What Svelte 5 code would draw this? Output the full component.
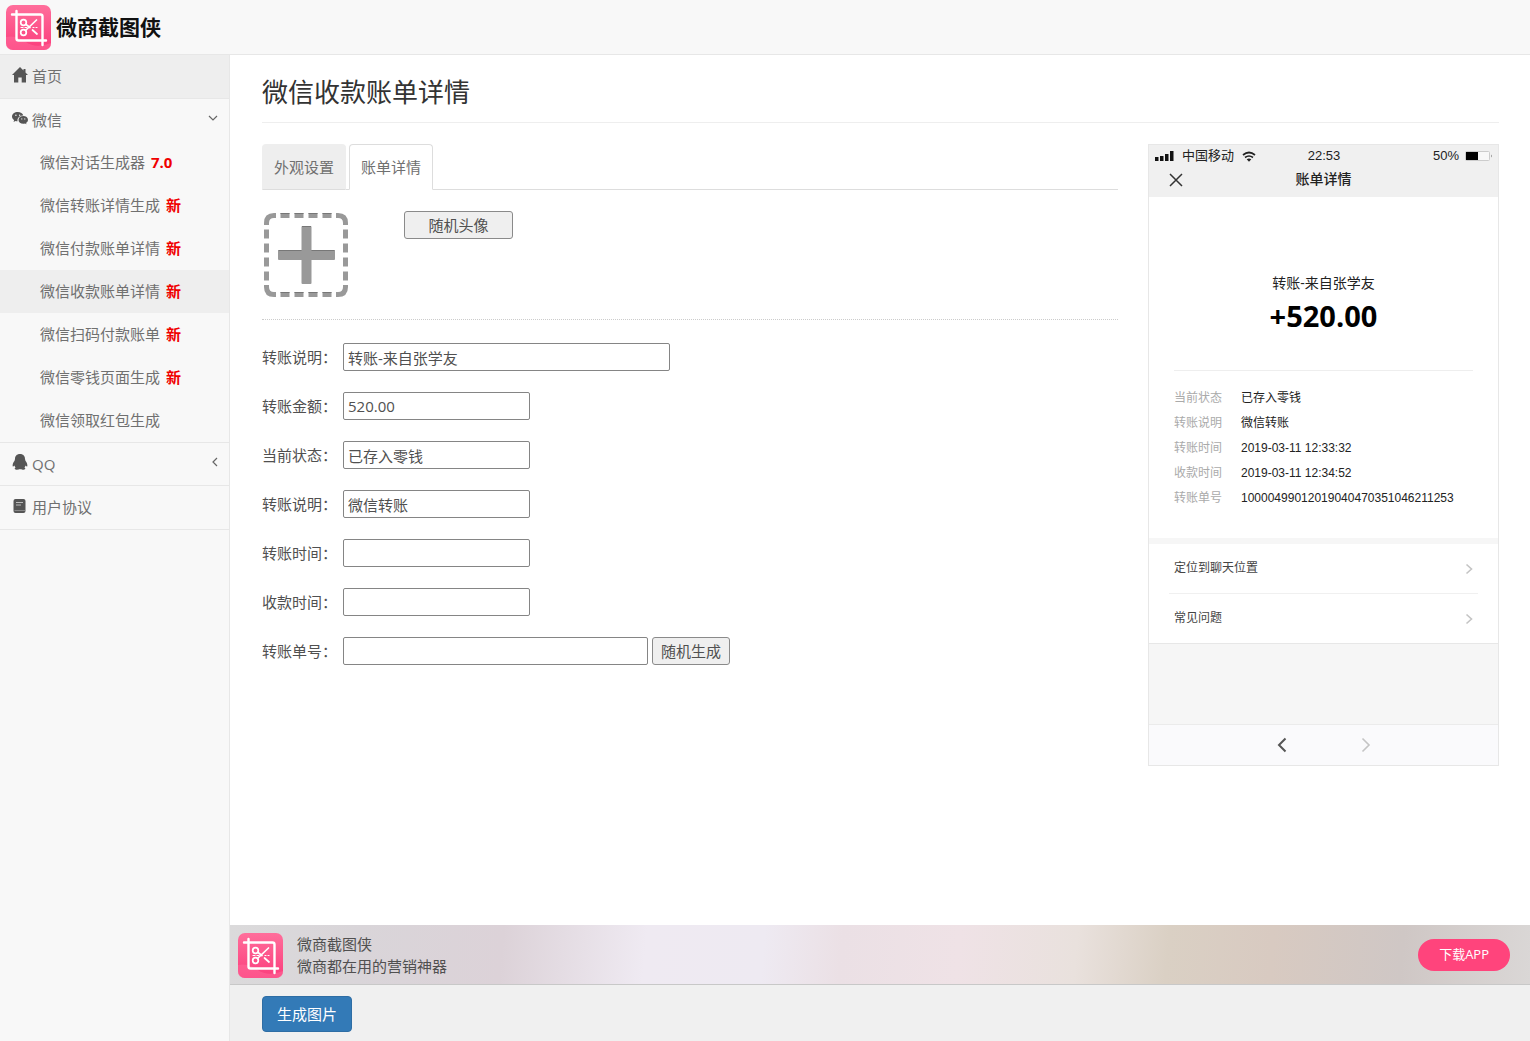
<script>
  let openMenu = $state('wechat');
  let activeTab = $state('detail');

  const wechatItems = [
    { name: '微信对话生成器', tag: '7.0' },
    { name: '微信转账详情生成', tag: '新' },
    { name: '微信付款账单详情', tag: '新' },
    { name: '微信收款账单详情', tag: '新', active: true },
    { name: '微信扫码付款账单', tag: '新' },
    { name: '微信零钱页面生成', tag: '新' },
    { name: '微信领取红包生成' }
  ];

  const tabs = [
    { id: 'look', name: '外观设置' },
    { id: 'detail', name: '账单详情' }
  ];

  let fields = $state([
    { id: 'title', label: '转账说明：', value: '转账-来自张学友', size: 'wide' },
    { id: 'amount', label: '转账金额：', value: '520.00' },
    { id: 'status', label: '当前状态：', value: '已存入零钱' },
    { id: 'remark', label: '转账说明：', value: '微信转账' },
    { id: 'sendTime', label: '转账时间：', value: '' },
    { id: 'receiveTime', label: '收款时间：', value: '' },
    { id: 'orderNo', label: '转账单号：', value: '', size: 'long', random: true }
  ]);

  const sendTime = '2019-03-11 12:33:32';
  const receiveTime = '2019-03-11 12:34:52';
  const orderNo = '10000499012019040470351046211253';

  let details = $derived([
    ['当前状态', fields[2].value],
    ['转账说明', fields[3].value],
    ['转账时间', fields[4].value || sendTime],
    ['收款时间', fields[5].value || receiveTime],
    ['转账单号', fields[6].value || orderNo]
  ]);

  function toggle(menu) {
    openMenu = openMenu === menu ? '' : menu;
  }

  function randomOrder() {
    let no = '1000049901';
    while (no.length < 32) no += Math.floor(Math.random() * 10);
    fields[6].value = no;
  }
</script>

{#snippet logo()}
  <svg class="logo" viewBox="0 0 46 46" aria-hidden="true">
    <defs>
      <linearGradient id="pink" x1="0" y1="0" x2="0" y2="1">
        <stop offset="0" stop-color="#ff6e9b" />
        <stop offset="1" stop-color="#fb3d7c" />
      </linearGradient>
    </defs>
    <rect x="0" y="1" width="45" height="45" rx="7" fill="url(#pink)" />
    <path d="M0 33q10-2 20 5t25 1v0q0 7-7 7H7q-7 0-7-7z" fill="#ff6b9b" opacity=".5" />
    <g fill="none" stroke="#fff" stroke-linecap="round">
      <path d="M6 10.500h28.500q2 0 2 2V41M10.500 7v27.500q0 2 2 2H40" stroke-width="2.400" />
      <circle cx="17.500" cy="18.500" r="2.800" stroke-width="1.700" />
      <circle cx="17.500" cy="28.500" r="2.800" stroke-width="1.700" />
      <path d="M19.500 26.500L30.500 16M20 20.500l4 3M26.500 26l4.500 4" stroke-width="1.700" />
      <path d="M15 23.500h2M19 23.500h2M27 23.500h1M30 23.500h1" stroke-width="1.200" />
    </g>
  </svg>
{/snippet}

<div class="page">
  <header class="navbar">
    <a class="brand" href="#home">
      {@render logo()}
      <span>微商截图侠</span>
    </a>
  </header>

  <div class="body">
    <nav class="sidebar">
      <a class="menu-item current" href="#home">
        <svg class="menu-icon" viewBox="0 0 16 16" aria-hidden="true">
          <path d="M8 0L0 8h2v7.500h4.300v-5h3.400v5H14V8h2l-2.500-2.600V2h-2v1.400z" fill="#555" />
        </svg>
        首页
      </a>

      <button class="menu-item open" aria-expanded={openMenu === 'wechat'} onclick={() => toggle('wechat')}>
        <svg class="menu-icon" viewBox="0 0 16 16" aria-hidden="true">
          <path d="M5.800 2C2.600 2 0 4 0 6.600c0 1.500.8 2.700 2.100 3.600l-.6 1.700 2-1c.7.200 1.400.3 2 .3C5 8 7.500 5.500 11.300 5.500 10.800 3.500 8.500 2 5.800 2z" fill="#555" />
          <path d="M16 9.900c0-2.100-2.100-3.800-4.700-3.800S6.500 7.800 6.500 9.900s2.100 3.800 4.800 3.800c.6 0 1.100-.1 1.700-.3l1.500.8-.4-1.300c1.100-.8 1.900-1.800 1.900-3z" fill="#555" />
          <g fill="#f8f8f8">
            <circle cx="3.900" cy="5.300" r=".7" /><circle cx="7.700" cy="5.300" r=".7" />
            <circle cx="9.800" cy="8.900" r=".6" /><circle cx="12.800" cy="8.900" r=".6" />
          </g>
        </svg>
        微信
        <svg class="arrow" viewBox="0 0 12 12" aria-hidden="true">
          <path d="M2 4l4 4 4-4" />
        </svg>
      </button>

      {#if openMenu === 'wechat'}
        <ul class="submenu">
          {#each wechatItems as item}
            <li>
              <a class:active={item.active} href="#wechat">
                {item.name}
                {#if item.tag}<b>{item.tag}</b>{/if}
              </a>
            </li>
          {/each}
        </ul>
      {/if}

      <button class="menu-item line" aria-expanded={openMenu === 'qq'} onclick={() => toggle('qq')}>
        <svg class="menu-icon" viewBox="0 0 16 16" aria-hidden="true">
          <path d="M8 0C4.700 0 2.900 2.200 3 5.200c-.3.500-.5 1-.4 1.600C1.200 8.600.3 10.500.7 12.300c.2.600 1.100.1 1.700-.8.200.8.600 1.500 1.200 2-.8.400-1 1-.8 1.500.4 1 4.100 1 5.200.1 1.100.9 4.800.9 5.200-.1.200-.5 0-1.100-.8-1.500.6-.5 1-1.200 1.200-2 .6.900 1.500 1.400 1.700.8.400-1.800-.5-3.700-1.900-5.500.1-.6-.1-1.100-.4-1.600C13.100 2.200 11.300 0 8 0z" fill="#555" />
        </svg>
        QQ
        <svg class="arrow" viewBox="0 0 12 12" aria-hidden="true">
          <path d="M10 2L6 6l4 4" />
        </svg>
      </button>

      <a class="menu-item" href="#agreement">
        <svg class="menu-icon" viewBox="0 0 16 16" aria-hidden="true">
          <rect x="1.500" y="1" width="12" height="14" rx="2" fill="#555" />
          <path d="M4 4.500h7M4 7h5" stroke="#bbb" />
          <path d="M2.500 12.500h10.500" stroke="#888" />
        </svg>
        用户协议
      </a>
    </nav>

    <div class="content">
      <main>
        <h1>微信收款账单详情</h1>

        <div class="columns">
          <section class="editor">
            <div class="tabs" role="tablist">
              {#each tabs as tab}
                <button
                  role="tab"
                  class="tab"
                  class:active={activeTab === tab.id}
                  aria-selected={activeTab === tab.id}
                  onclick={() => (activeTab = tab.id)}
                >{tab.name}</button>
              {/each}
            </div>

            <div class="avatar-row">
              <button class="upload" aria-label="上传头像">
                <svg viewBox="0 0 84 84" aria-hidden="true">
                  <g fill="none" stroke="#999" stroke-width="5">
                    <path d="M2.500 12V10q0-7.500 7.500-7.500h2M72 2.500h2q7.500 0 7.500 7.500v2M81.500 72v2q0 7.500-7.500 7.500h-2M12 81.500h-2q-7.500 0-7.500-7.500v-2" />
                    <path d="M16.500 2.500H68M16.500 81.500H68M2.500 16.500V68M81.500 16.500V68" stroke-dasharray="9 5" />
                  </g>
                  <path d="M16.500 .5H25.500M30.500 .5h9M44.500 .5h9M58.500 .5h9M16.500 79.500h9M30.500 79.500h9M44.500 79.500h9M58.500 79.500h9" stroke="#777" />
                  <rect x="14" y="37" width="57" height="10" rx="1" fill="#999" />
                  <rect x="37.500" y="13" width="10" height="58" rx="1" fill="#999" />
                  <path d="M14.500 37.500h23M47.500 37.500h23M38 13.500h9" stroke="#777" />
                </svg>
              </button>
              <button class="plain random-avatar">随机头像</button>
            </div>

            <form class="fields">
              {#each fields as field}
                <div class="field">
                  <label for={field.id}>{field.label}</label>
                  <input id={field.id} type="text" class={field.size} bind:value={field.value} />
                  {#if field.random}
                    <button type="button" class="plain" onclick={randomOrder}>随机生成</button>
                  {/if}
                </div>
              {/each}
            </form>
          </section>

          <aside class="phone">
            <div class="phone-head">
              <div class="status">
                <div class="status-left">
                  <svg class="signal" viewBox="0 0 19 10" aria-hidden="true">
                    <path d="M0 6h3.500v4H0zM5 5h3.500v5H5zM10 3h3.500v7H10zM15 0h3.500v10H15z" fill="#111" />
                  </svg>
                  <span>中国移动</span>
                  <svg class="wifi" viewBox="0 0 14 11" aria-hidden="true">
                    <path d="M1 4q6-5 12 0M3 6.500q4-3 8 0" fill="none" stroke="#222" stroke-width="1.700" />
                    <path d="M4.700 8.300q2.300-1.500 4.600 0L7 10.800z" fill="#222" />
                  </svg>
                </div>
                <span>22:53</span>
                <div class="status-right">
                  <span>50%</span>
                  <svg class="battery" viewBox="0 0 28 10" aria-hidden="true">
                    <rect x=".5" y=".5" width="24" height="9" rx="1" fill="#f8f8f8" stroke="#ccc" />
                    <rect x="1" y="1" width="12" height="8" fill="#000" />
                    <path d="M26 3.500q2 1.500 0 3z" fill="#999" />
                  </svg>
                </div>
              </div>
              <div class="phone-title">
                <svg class="close" viewBox="0 0 14 14" aria-hidden="true">
                  <path d="M1 1l12 12M13 1L1 13" stroke="#333" stroke-width="1.500" />
                </svg>
                <strong>账单详情</strong>
              </div>
            </div>

            <div class="summary">
              <p>{fields[0].value}</p>
              <strong>+{fields[1].value}</strong>
            </div>

            <dl class="details">
              {#each details as [name, value]}
                <dt>{name}</dt>
                <dd>{value}</dd>
              {/each}
            </dl>

            <div class="links">
              {#each ['定位到聊天位置', '常见问题'] as link}
                <a href="#help">
                  {link}
                  <svg viewBox="0 0 8 12" aria-hidden="true">
                    <path d="M1.500 1.500L6.500 6l-5 4.500" fill="none" stroke="#c4c4c4" stroke-width="1.600" />
                  </svg>
                </a>
              {/each}
            </div>

            <div class="blank"></div>

            <div class="pager">
              <svg viewBox="0 0 10 16" aria-hidden="true">
                <path d="M8.500 1.500L2 8l6.500 6.500" fill="none" stroke="#555" stroke-width="2" />
              </svg>
              <svg viewBox="0 0 10 16" aria-hidden="true">
                <path d="M1.500 1.500L8 8l-6.500 6.500" fill="none" stroke="#c4c4c4" stroke-width="1.600" />
              </svg>
            </div>
          </aside>
        </div>
      </main>

      <div class="banner">
        {@render logo()}
        <p>微商截图侠<br />微商都在用的营销神器</p>
        <a href="#download">下载APP</a>
      </div>

      <footer>
        <button class="primary">生成图片</button>
      </footer>
    </div>
  </div>
</div>

<style>
  :global(body) {
    margin: 0;
    background: #fff;
  }

  .page {
    display: flex;
    flex-direction: column;
    min-height: 100vh;
    font-family: "Open Sans", "Noto Sans CJK SC", sans-serif;
    font-size: 15px;
    line-height: 21px;
    color: #505050;
  }

  .page :is(button, input) {
    font: inherit;
    color: inherit;
    box-sizing: border-box;
  }

  .page a {
    text-decoration: none;
  }

  .navbar {
    display: flex;
    background: #f8f8f8;
    border-bottom: 1px solid #e7e7e7;
    padding: 4px 6px;
  }

  .brand {
    display: flex;
    align-items: center;
    gap: 4px;
    color: #111;
    font-size: 21px;
    font-weight: 700;
  }

  .logo {
    width: 46px;
    height: 46px;
    flex: none;
  }

  .body {
    display: flex;
    flex: 1;
  }

  .sidebar {
    width: 229px;
    flex: none;
    background: #f8f8f8;
    border-right: 1px solid #e7e7e7;
  }

  .page .menu-item {
    display: flex;
    align-items: center;
    gap: 4px;
    box-sizing: border-box;
    width: 100%;
    height: 44px;
    padding: 0 12px;
    border: 0;
    border-bottom: 1px solid #e7e7e7;
    background: none;
    color: #707070;
    text-align: left;
    cursor: pointer;
  }

  .page .menu-item.current {
    background: #eee;
  }

  .page .menu-item.open {
    height: 42px;
    border-bottom: 0;
  }

  .page .menu-item.line {
    border-top: 1px solid #e7e7e7;
  }

  .menu-icon {
    width: 16px;
    height: 16px;
    margin-bottom: 4px;
  }

  .arrow {
    width: 12px;
    height: 12px;
    margin: 0 -2px 4px auto;
    fill: none;
    stroke: #666;
    stroke-width: 1.2;
  }

  .submenu {
    list-style: none;
    margin: 0;
    padding: 0;
  }

  .submenu a {
    display: block;
    padding: 11px 0 11px 40px;
    color: #707070;
  }

  .submenu a.active {
    background: #eee;
  }

  .submenu b {
    margin-left: 2px;
    color: #f00000;
  }

  .content {
    display: flex;
    flex-direction: column;
    flex: 1;
    min-width: 0;
  }

  main {
    flex: 1;
    padding: 18px 31px 32px 32px;
  }

  h1 {
    margin: 0 0 21px;
    padding-bottom: 11px;
    border-bottom: 1px solid #eee;
    font-size: 26px;
    line-height: 38px;
    font-weight: 400;
    color: #333;
  }

  .columns {
    display: flex;
    align-items: flex-start;
    gap: 30px;
  }

  .editor {
    flex: 1;
    min-width: 0;
  }

  .tabs {
    display: flex;
    gap: 3px;
    border-bottom: 1px solid #ddd;
  }

  .page .tab {
    height: 46px;
    margin-bottom: -1px;
    padding: 0 11px;
    border: 1px solid #eee;
    border-bottom-color: #ddd;
    border-radius: 4px 4px 0 0;
    background: #eee;
    color: #707070;
  }

  .page .tab.active {
    border-color: #ddd;
    border-bottom-color: #fff;
    background: #fff;
  }

  .avatar-row {
    display: flex;
    align-items: flex-start;
    gap: 56px;
    padding: 21px 0 22px 2px;
    border-bottom: 1px dotted #ccc;
  }

  .upload {
    display: block;
    padding: 2px 0 0;
    border: 0;
    background: none;
  }

  .upload svg {
    display: block;
    width: 84px;
    height: 84px;
  }

  .page .plain {
    height: 28px;
    padding: 0 8px;
    border: 1px solid #8a8a8a;
    border-radius: 3px;
    background: #efefef;
    line-height: 20px;
  }

  .page .random-avatar {
    width: 109px;
  }

  .fields {
    display: flex;
    flex-direction: column;
    gap: 21px;
    padding-top: 23px;
  }

  .field {
    display: flex;
    align-items: center;
    gap: 4px;
  }

  label {
    width: 77px;
    white-space: nowrap;
  }

  .field input {
    width: 187px;
    height: 28px;
    padding: 0 4px;
    border: 1px solid #858585;
    border-radius: 2px;
    background: #fff;
  }

  .field input.wide {
    width: 327px;
  }

  .field input.long {
    width: 305px;
  }

  .phone {
    width: 349px;
    flex: none;
    border: 1px solid #e7e7e7;
    font-family: "Liberation Sans", "Noto Sans CJK SC", sans-serif;
    font-size: 12px;
    line-height: 25px;
    color: #222;
  }

  .phone-head {
    background: #f0f0f0;
    padding-bottom: 5px;
  }

  .status {
    display: grid;
    grid-template-columns: 1fr auto 1fr;
    align-items: center;
    padding: 0 5px 0 6px;
    font-size: 13px;
    line-height: 22px;
  }

  .status-left,
  .status-right {
    display: flex;
    align-items: center;
    gap: 8px;
  }

  .status-right {
    justify-content: flex-end;
    gap: 6px;
  }

  .signal {
    width: 19px;
    height: 10px;
  }

  .wifi {
    width: 14px;
    height: 11px;
  }

  .battery {
    width: 28px;
    height: 10px;
  }

  .phone-title {
    display: grid;
    grid-template-columns: 1fr auto 1fr;
    align-items: center;
    padding: 0 20px;
    font-size: 14px;
  }

  .phone-title strong {
    font-weight: 500;
  }

  .close {
    width: 14px;
    height: 14px;
  }

  .summary {
    margin: 0 25px;
    padding: 73px 0 34px;
    border-bottom: 1px solid #eee;
    font-family: "Open Sans", "Noto Sans CJK SC", sans-serif;
    text-align: center;
  }

  .summary p {
    margin: 0;
    font-size: 14px;
    line-height: 26px;
  }

  .summary strong {
    display: block;
    font-size: 29px;
    line-height: 40px;
    color: #000;
  }

  .details {
    display: grid;
    grid-template-columns: 67px 1fr;
    margin: 0;
    padding: 15px 25px 27px;
    border-bottom: 6px solid #f6f6f6;
  }

  dt {
    color: #aaa;
  }

  dd {
    margin: 0;
  }

  .links {
    padding: 0 20px;
    border-bottom: 1px solid #e7e7e7;
  }

  .links a {
    display: flex;
    align-items: center;
    justify-content: space-between;
    height: 49px;
    padding: 0 5px;
    color: #444;
  }

  .links a + a {
    border-top: 1px solid #f0f0f0;
  }

  .links svg {
    width: 8px;
    height: 12px;
  }

  .blank {
    height: 80px;
    background: #f6f6f6;
    border-bottom: 1px solid #ebebeb;
  }

  .pager {
    display: flex;
    justify-content: center;
    gap: 74px;
    padding: 12px 0;
    background: #fafafc;
  }

  .pager svg {
    width: 10px;
    height: 16px;
  }

  .banner {
    display: flex;
    align-items: center;
    padding: 7px 20px 6px 8px;
    border-bottom: 1px solid #c8c8c8;
    background: linear-gradient(95deg, #dbdadb, #d9d5d9 10%, #dcd2d8 21%, #efeaf2 32%, #eeeaf2 41%, #ebe0e5 47%, #efe2e6 56%, #e9e1dd 65%, #dad0c4 72%, #d8cac1 80%, #cfc7c5 90%, #dad7d6);
  }

  .banner p {
    flex: 1;
    margin: 0 0 0 13px;
    line-height: 22px;
  }

  .banner a {
    padding: 5px 21px 6px;
    border-radius: 16px;
    background: #ff447c;
    color: #fff;
    font-size: 13px;
  }

  footer {
    padding: 11px 32px 9px;
    background: #f0f0f0;
  }

  .page .primary {
    height: 36px;
    padding: 0 14px;
    border: 1px solid #2e6da4;
    border-radius: 4px;
    background: #337ab7;
    color: #fff;
  }
</style>
